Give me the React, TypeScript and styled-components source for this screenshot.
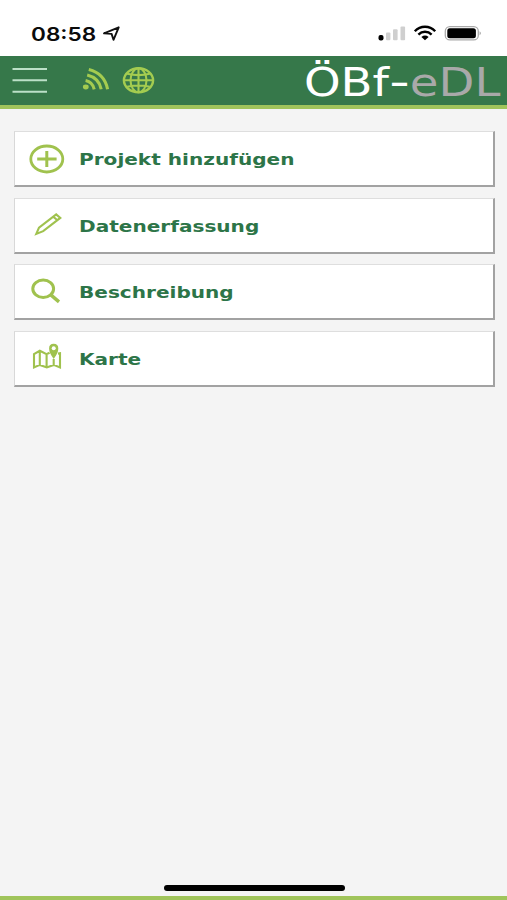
import React from "react";
import styled, { createGlobalStyle } from "styled-components";

const GlobalStyle = createGlobalStyle`
  *, *::before, *::after { box-sizing: border-box; }
  body { margin: 0; background: #f4f4f4; font-family: "DejaVu Sans", Verdana, sans-serif; }
  svg { display: block; overflow: visible; flex: none; }
`;

const Screen = styled.div`
  width: 507px;
  height: 900px;
  display: flex;
  flex-direction: column;
  overflow: hidden;
  background: #f4f4f4;
`;

const StatusBar = styled.div`
  height: 56px;
  flex: none;
  display: flex;
  align-items: flex-start;
  padding: 0 25px 0 31px;
  background: #fff;
`;

const Clock = styled.span`
  width: 72px;
  margin-top: 21.5px;
  font: 600 18.5px/24px Inter, sans-serif;
  color: #0b0b0b;
  white-space: nowrap;
  transform: scaleX(1.22);
  transform-origin: left center;
`;

const StatusIcons = styled.div`
  display: flex;
  gap: 8px;
  margin: 26px 0 0 auto;
`;

const LocationIcon = styled.svg`
  margin-top: 26px;
`;

const Header = styled.header`
  height: 53px;
  flex: none;
  display: flex;
  align-items: flex-start;
  padding: 0 6.5px 0 12px;
  background: #36784a;
  border-bottom: 4px solid #a0c45b;
`;

const MenuButton = styled.button`
  width: 36px;
  height: 49px;
  display: flex;
  align-items: flex-start;
  padding: 11px 0 0;
  border: 0;
  background: none;
`;

const HeaderIcons = styled.div`
  display: flex;
  gap: 13px;
  margin: 11px 0 0 34px;
`;

const Title = styled.h1`
  margin: 2px 0 0 auto;
  font-size: 38.5px;
  font-weight: 400;
  line-height: 49px;
  color: #fff;
  white-space: nowrap;
  transform: scaleX(1.21);
  transform-origin: right center;
`;

const TitleDash = styled.span`
  display: inline-block;
  margin: 0 2px 0 1.4px;
  transform: translateY(-1px) scaleX(1.22);
`;

const TitleSuffix = styled.span`
  color: #a9a9a9;
`;

const Menu = styled.nav`
  flex: 1;
  display: flex;
  flex-direction: column;
  gap: 10.3px;
  padding: 22.4px 12px 0 14px;
`;

const MenuItem = styled.button`
  height: 56.1px;
  flex: none;
  display: flex;
  align-items: center;
  padding: 0;
  border: solid;
  border-width: 1px 2px 2px 1px;
  border-color: #dedede #a2a2a2 #a2a2a2 #d8d8d8;
  background: #fff;
  text-align: left;
`;

const IconSlot = styled.span`
  width: 64px;
  display: flex;
  padding-left: 14px;
`;

const Label = styled.span`
  margin-top: 3px;
  font: 700 16.5px/24px "DejaVu Sans", Verdana, sans-serif;
  color: #2d7548;
  white-space: nowrap;
  transform: scaleX(1.216);
  transform-origin: left center;
`;

const Footer = styled.footer`
  flex: none;
  display: flex;
  flex-direction: column;
  align-items: center;
  border-bottom: 4px solid #a0c45b;
`;

const HomeIndicator = styled.div`
  width: 181px;
  height: 6px;
  margin: 0 0 5px 1px;
  border-radius: 3px;
  background: #000;
`;

const GREEN = "#a0c24e";

const PlusIcon = () => (
  <svg width="36" height="30" viewBox="0 0 36 30" fill="none" stroke={GREEN}>
    <ellipse cx="17.8" cy="15" rx="16" ry="13" strokeWidth="2.8" />
    <path d="M8.2 15H27.6M17.8 7v16" strokeWidth="3" />
  </svg>
);

const PencilIcon = () => (
  <svg width="36" height="30" viewBox="0 0 36 30" fill="none" stroke={GREEN} strokeWidth="2.1">
    <path d="M7.3 23.9L10 17.6L27.2 4.4L31.3 7.9L14.2 21.2Z M24.3 6.7L28.4 10.2" />
  </svg>
);

const SearchIcon = () => (
  <svg width="36" height="30" viewBox="0 0 36 30" fill="none" stroke={GREEN}>
    <ellipse cx="14.2" cy="11.7" rx="10.4" ry="8.7" strokeWidth="3" />
    <path d="M21.5 17.6L30 24.9" strokeWidth="3.4" />
  </svg>
);

const MapIcon = () => (
  <svg width="36" height="30" viewBox="0 0 36 30" fill="none" stroke={GREEN} strokeWidth="2.1">
    <path d="M20.6 9.7L17.5 11.2L10.8 7.8L5 11V24.5L10.8 21.9L17.8 24.5L24.7 21.9L31 24.5V10.2L29 10.6M10.8 8V22M17.6 11.3V24.2M24.7 16V22" />
    <path d="M24.7 14.6C22.5 11.5 20.9 8.4 20.9 5.4C20.9 0.4 28.5 0.4 28.5 5.4C28.5 8.4 26.9 11.5 24.7 14.6Z" fill={GREEN} strokeWidth="1.6" />
    <circle cx="24.7" cy="5.2" r="2" fill="#fff" stroke="none" />
  </svg>
);

const ITEMS = [
  { label: "Projekt hinzufügen", Icon: PlusIcon },
  { label: "Datenerfassung", Icon: PencilIcon },
  { label: "Beschreibung", Icon: SearchIcon },
  { label: "Karte", Icon: MapIcon },
];

export default function App() {
  return (
    <Screen>
      <GlobalStyle />
      <StatusBar>
        <Clock>08:58</Clock>
        <LocationIcon width="17" height="15" viewBox="0 0 17 15" fill="none" stroke="#111" strokeWidth="1.9" strokeLinejoin="round">
          <path d="M15.7 1.3L1 7.3L8.6 7.9L10.5 13.8Z" />
        </LocationIcon>
        <StatusIcons>
          <svg width="28" height="15" viewBox="0 0 28 15">
            <rect x="0.5" y="9" width="5" height="5.5" rx="2" fill="#000" />
            <rect x="8" y="6.5" width="4.4" height="7.8" rx="1" fill="#cfcfcf" />
            <rect x="15" y="3.2" width="4.6" height="11.1" rx="1" fill="#cfcfcf" />
            <rect x="22.5" y="0.5" width="4.6" height="13.8" rx="1" fill="#cfcfcf" />
          </svg>
          <svg width="22" height="15" viewBox="0 0 22 15" fill="none" stroke="#000" strokeWidth="2.4">
            <path d="M0.8 5.3C6.5-0.8 15.5-0.8 21.2 5.3M4.4 8.6C8.2 4.8 13.8 4.8 17.6 8.6" />
            <path d="M7.4 11Q11 8.1 14.6 11L11 14.2Z" fill="#000" stroke="none" />
          </svg>
          <svg width="38" height="15" viewBox="0 0 38 15">
            <rect x="1.3" y="0.7" width="33" height="13.2" rx="4.5" fill="none" stroke="#aaa" strokeWidth="1.3" />
            <rect x="3.3" y="2.2" width="28.6" height="10" rx="2.5" fill="#000" />
            <path d="M35.7 5.2q2 2 0 4z" fill="#888" />
          </svg>
        </StatusIcons>
      </StatusBar>
      <Header>
        <MenuButton aria-label="Menü">
          <svg width="36" height="27" viewBox="0 0 36 27" stroke="#bce0c8" strokeWidth="2">
            <path d="M0.5 2H35M0.5 13.3H35M0.5 24.7H35" />
          </svg>
        </MenuButton>
        <HeaderIcons>
          <svg width="28" height="24" viewBox="0 0 28 24" fill="none" stroke="#a4cc50" strokeWidth="3.1">
            <ellipse cx="3.8" cy="20" rx="2.9" ry="2.4" fill="#a4cc50" stroke="none" />
            <path d="M3.6 13.6Q10.5 15 12.2 22.3M5.2 8.1Q17 11 19.2 22.3M6.8 2.6Q22.5 6.6 25.6 22.3" />
          </svg>
          <svg width="32" height="27" viewBox="0 0 32 27" fill="none" stroke="#a4cc50" strokeWidth="2.1">
            <ellipse cx="15.5" cy="13.3" rx="14.6" ry="12" strokeWidth="2.4" />
            <ellipse cx="15.5" cy="13.3" rx="8" ry="12" />
            <path d="M1 13.3H30M15.5 1.3V25.3M4.2 6.8Q15.5 9.4 26.8 6.8M4.2 19.8Q15.5 17.2 26.8 19.8" />
          </svg>
        </HeaderIcons>
        <Title>ÖBf<TitleDash>-</TitleDash><TitleSuffix>eDL</TitleSuffix></Title>
      </Header>
      <Menu>
        {ITEMS.map(({ label, Icon }) => (
          <MenuItem key={label}>
            <IconSlot><Icon /></IconSlot>
            <Label>{label}</Label>
          </MenuItem>
        ))}
      </Menu>
      <Footer>
        <HomeIndicator />
      </Footer>
    </Screen>
  );
}
